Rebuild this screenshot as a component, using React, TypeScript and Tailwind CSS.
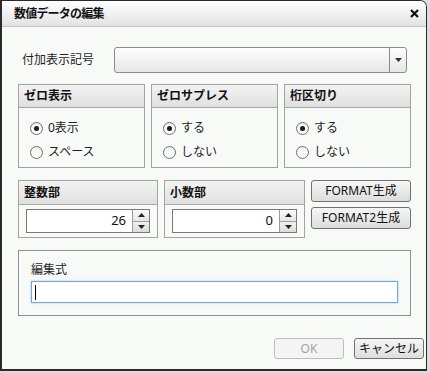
import React from 'react';

const FONT = { fontFamily: '"Noto Sans", "Noto Sans CJK JP", sans-serif' };

function Radio({ label, checked }: { label: string; checked?: boolean }) {
  return (
    <div className="flex items-center h-[24px] pl-[11px]">
      <span className="relative w-[13px] h-[13px] rounded-full border border-[#6d6d6d] bg-gradient-to-b from-[#f0f0f0] to-white flex items-center justify-center">
        {checked && <span className="w-[5px] h-[5px] rounded-full bg-[#1a1a1a]" />}
      </span>
      <span className="ml-[5px] text-[12px] text-[#1e1e1e]">{label}</span>
    </div>
  );
}

function GroupHeader({ title }: { title: string }) {
  return (
    <div className="h-[23px] flex items-center px-[5px] border-b border-[#a9a9a9] bg-gradient-to-b from-[#f3f3f3] to-[#e0e0e0] text-[12px] font-bold text-[#111]">
      {title}
    </div>
  );
}

function RadioGroup({ title, items, selected }: { title: string; items: string[]; selected: number }) {
  return (
    <div className="w-[127px] h-[84px] border border-[#a3a3a3] bg-[#f8faf8]">
      <GroupHeader title={title} />
      <div className="pt-[8px]">
        {items.map((it, i) => (
          <Radio key={it} label={it} checked={i === selected} />
        ))}
      </div>
    </div>
  );
}

function Spinner({ value }: { value: string }) {
  return (
    <div className="flex h-[24px] border border-[#7a7a7a] bg-white">
      <div className="flex-1 flex items-center justify-end pr-[6px] text-[13px] text-[#111]">{value}</div>
      <div className="w-[17px] flex flex-col border-l border-[#9a9a9a]">
        <div className="flex-1 flex items-center justify-center bg-gradient-to-b from-[#fafafa] to-[#e6e6e6] border-b border-[#a0a0a0]">
          <svg width="7" height="4" viewBox="0 0 7 4"><path d="M3.5 0L7 4H0z" fill="#222" /></svg>
        </div>
        <div className="flex-1 flex items-center justify-center bg-gradient-to-b from-[#f0f0f0] to-[#dcdcdc]">
          <svg width="7" height="4" viewBox="0 0 7 4"><path d="M0 0h7L3.5 4z" fill="#222" /></svg>
        </div>
      </div>
    </div>
  );
}

function NumberGroup({ title, value, width }: { title: string; value: string; width: string }) {
  return (
    <div className={`${width} h-[58px] border border-[#a3a3a3] bg-[#f8faf8]`}>
      <div className="h-[24px] flex items-center px-[5px] border-b border-[#a9a9a9] bg-gradient-to-b from-[#f3f3f3] to-[#e0e0e0] text-[12px] font-bold text-[#111]">
        {title}
      </div>
      <div className="pt-[4px] px-[7px]">
        <Spinner value={value} />
      </div>
    </div>
  );
}

function Button({ children, disabled, className = '' }: { children: React.ReactNode; disabled?: boolean; className?: string }) {
  return (
    <div
      className={`flex items-center justify-center rounded-[3px] border text-[12px] ${
        disabled
          ? 'border-[#bdbdbd] bg-[#f4f4f4] text-[#a3a3a3]'
          : 'border-[#707070] bg-gradient-to-b from-[#f6f6f6] to-[#dddddd] text-[#111]'
      } ${className}`}
    >
      {children}
    </div>
  );
}

export default function App() {
  return (
    <div className="w-[430px] h-[373px] bg-[#dcdcdc] overflow-hidden" style={FONT}>
      <div className="w-[427px] h-[371px] bg-[#f8faf8] border-l-2 border-r border-b-2 border-t border-[#2a2a2a] rounded-tr-[7px] overflow-hidden flex flex-col">
        {/* Title bar */}
        <div className="h-[26px] shrink-0 flex items-center justify-between pl-[12px] pr-[7px] bg-gradient-to-b from-white to-[#e3e3e3] border-b border-[#c4c4c4]">
          <span className="text-[12px] font-bold text-[#111] tracking-[-0.8px]">数値データの編集</span>
          <svg width="9" height="9" viewBox="0 0 9 9">
            <path d="M1 1L8 8M8 1L1 8" stroke="#111" strokeWidth="2.2" />
          </svg>
        </div>

        <div className="pl-[16px] pt-[20px]">
          {/* 付加表示記号 */}
          <div className="flex items-center h-[26px]">
            <span className="w-[96px] pl-[4px] text-[12px] text-[#1e1e1e]">付加表示記号</span>
            <div className="w-[293px] h-[26px] flex rounded-[3px] border border-[#8a8a8a] bg-gradient-to-b from-[#fdfdfd] to-[#e6e6e6]">
              <div className="flex-1" />
              <div className="w-[17px] border-l border-[#8a8a8a] flex items-center justify-center">
                <svg width="7" height="4" viewBox="0 0 7 4"><path d="M0 0h7L3.5 4z" fill="#333" /></svg>
              </div>
            </div>
          </div>

          {/* Radio groups */}
          <div className="flex gap-[6px] mt-[11px]">
            <RadioGroup title="ゼロ表示" items={['0表示', 'スペース']} selected={0} />
            <RadioGroup title="ゼロサプレス" items={['する', 'しない']} selected={0} />
            <RadioGroup title="桁区切り" items={['する', 'しない']} selected={0} />
          </div>

          {/* Number groups */}
          <div className="flex gap-[6px] mt-[12px]">
            <NumberGroup title="整数部" value="26" width="w-[140px]" />
            <NumberGroup title="小数部" value="0" width="w-[141px]" />
            <div className="flex flex-col gap-[5px]">
              <Button className="w-[100px] h-[22px]">FORMAT生成</Button>
              <Button className="w-[100px] h-[22px]">FORMAT2生成</Button>
            </div>
          </div>

          {/* 編集式 */}
          <div className="w-[393px] h-[66px] mt-[12px] border border-[#8f8f8f] pl-[12px] pt-[11px]">
            <div className="text-[12px] text-[#1e1e1e] leading-[16px]">編集式</div>
            <div className="w-[367px] h-[22px] mt-[3px] border border-[#6fa7de] bg-white shadow-[0_0_2px_#9cc6ef] flex items-center pl-[3px]">
              <span className="w-[1px] h-[15px] bg-black" />
            </div>
          </div>
        </div>

        {/* Footer */}
        <div className="flex justify-end gap-[10px] pr-[2px] mt-[22px]">
          <Button disabled className="w-[70px] h-[21px]">OK</Button>
          <Button className="w-[70px] h-[21px]">キャンセル</Button>
        </div>
      </div>
    </div>
  );
}
